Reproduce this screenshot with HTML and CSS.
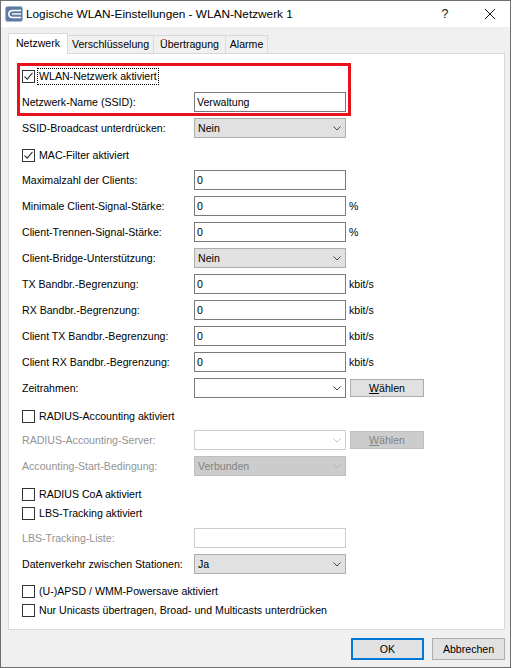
FILE: index.html
```html
<!DOCTYPE html>
<html lang="de">
<head>
<meta charset="utf-8">
<title>Logische WLAN-Einstellungen</title>
<link rel="stylesheet" href="styles.css">
</head>
<body>
<div class="window">
  <div class="titlebar">
    <svg class="app-icon" width="18" height="16" viewBox="0 0 18 16">
      <rect x="0.5" y="0.5" width="17" height="15" rx="2" fill="#5d7ca4" stroke="#a9bad0"/>
      <path d="M16 4.5 H8 Q3.8 4.5 3.8 8 Q3.8 11.5 8 11.5 H16" fill="none" stroke="#fff" stroke-width="1.6"/>
      <path d="M7 8 H16" stroke="#fff" stroke-width="1.4"/>
    </svg>
    <span class="title">Logische WLAN-Einstellungen - WLAN-Netzwerk 1</span>
    <span class="cap help">?</span>
    <span class="cap close">
      <svg width="10" height="10" viewBox="0 0 10 10"><path d="M0 0 L10 10 M10 0 L0 10" stroke="#111" stroke-width="1"/></svg>
    </span>
  </div>
  <div class="content">
    <div class="tabs">
      <div class="tab active">Netzwerk</div>
      <div class="tab w86">Verschlüsselung</div>
      <div class="tab w72">Übertragung</div>
      <div class="tab w42">Alarme</div>
    </div>
    <div class="panel">
      <div class="highlight">
        <div class="check">
          <span class="box"><svg width="11" height="11" viewBox="0 0 11 11"><path d="M1.5 5.5 L4.2 8.2 L9.5 1.8" fill="none" stroke="#333" stroke-width="1.1"/></svg></span>
          <span class="check-label focus">WLAN-Netzwerk aktiviert</span>
        </div>
        <div class="field gap-6">
          <span class="lbl">Netzwerk-Name (SSID):</span>
          <span class="textbox">Verwaltung</span>
        </div>
      </div>

      <div class="field gap-2">
        <span class="lbl">SSID-Broadcast unterdrücken:</span>
        <span class="select"><span>Nein</span><svg class="chev" width="8" height="5" viewBox="0 0 8 5"><path d="M0.5 0.5 L4 4 L7.5 0.5" fill="none" stroke="#444"/></svg></span>
      </div>

      <div class="check gap-8">
        <span class="box"><svg width="11" height="11" viewBox="0 0 11 11"><path d="M1.5 5.5 L4.2 8.2 L9.5 1.8" fill="none" stroke="#333" stroke-width="1.1"/></svg></span>
        <span class="check-label">MAC-Filter aktiviert</span>
      </div>

      <div class="field gap-5">
        <span class="lbl">Maximalzahl der Clients:</span>
        <span class="textbox">0</span>
      </div>
      <div class="field">
        <span class="lbl">Minimale Client-Signal-Stärke:</span>
        <span class="textbox">0</span>
        <span class="unit">%</span>
      </div>
      <div class="field">
        <span class="lbl">Client-Trennen-Signal-Stärke:</span>
        <span class="textbox">0</span>
        <span class="unit">%</span>
      </div>
      <div class="field">
        <span class="lbl">Client-Bridge-Unterstützung:</span>
        <span class="select"><span>Nein</span><svg class="chev" width="8" height="5" viewBox="0 0 8 5"><path d="M0.5 0.5 L4 4 L7.5 0.5" fill="none" stroke="#444"/></svg></span>
      </div>
      <div class="field">
        <span class="lbl">TX Bandbr.-Begrenzung:</span>
        <span class="textbox">0</span>
        <span class="unit">kbit/s</span>
      </div>
      <div class="field">
        <span class="lbl">RX Bandbr.-Begrenzung:</span>
        <span class="textbox">0</span>
        <span class="unit">kbit/s</span>
      </div>
      <div class="field">
        <span class="lbl">Client TX Bandbr.-Begrenzung:</span>
        <span class="textbox">0</span>
        <span class="unit">kbit/s</span>
      </div>
      <div class="field">
        <span class="lbl">Client RX Bandbr.-Begrenzung:</span>
        <span class="textbox">0</span>
        <span class="unit">kbit/s</span>
      </div>
      <div class="field">
        <span class="lbl">Zeitrahmen:</span>
        <span class="combo"><span></span><svg class="chev" width="8" height="5" viewBox="0 0 8 5"><path d="M0.5 0.5 L4 4 L7.5 0.5" fill="none" stroke="#444"/></svg></span>
        <span class="pick"><u>W</u>ählen</span>
      </div>

      <div class="check gap-9">
        <span class="box"></span>
        <span class="check-label">RADIUS-Accounting aktiviert</span>
      </div>

      <div class="field gap-4 disabled">
        <span class="lbl">RADIUS-Accounting-Server:</span>
        <span class="combo"><span></span><svg class="chev" width="8" height="5" viewBox="0 0 8 5"><path d="M0.5 0.5 L4 4 L7.5 0.5" fill="none" stroke="#c4c4c4"/></svg></span>
        <span class="pick"><u>W</u>ählen</span>
      </div>
      <div class="field disabled">
        <span class="lbl">Accounting-Start-Bedingung:</span>
        <span class="select"><span>Verbunden</span><svg class="chev" width="8" height="5" viewBox="0 0 8 5"><path d="M0.5 0.5 L4 4 L7.5 0.5" fill="none" stroke="#b4b4b4"/></svg></span>
      </div>

      <div class="check gap-9">
        <span class="box"></span>
        <span class="check-label">RADIUS CoA aktiviert</span>
      </div>
      <div class="check gap-0">
        <span class="box"></span>
        <span class="check-label">LBS-Tracking aktiviert</span>
      </div>

      <div class="field gap-5 disabled">
        <span class="lbl">LBS-Tracking-Liste:</span>
        <span class="textbox"></span>
      </div>
      <div class="field">
        <span class="lbl">Datenverkehr zwischen Stationen:</span>
        <span class="select"><span>Ja</span><svg class="chev" width="8" height="5" viewBox="0 0 8 5"><path d="M0.5 0.5 L4 4 L7.5 0.5" fill="none" stroke="#444"/></svg></span>
      </div>

      <div class="check gap-8">
        <span class="box"></span>
        <span class="check-label">(U-)APSD / WMM-Powersave aktiviert</span>
      </div>
      <div class="check gap-0">
        <span class="box"></span>
        <span class="check-label">Nur Unicasts übertragen, Broad- und Multicasts unterdrücken</span>
      </div>
    </div>
    <div class="buttons">
      <span class="btn default">OK</span>
      <span class="btn">Abbrechen</span>
    </div>
  </div>
</div>
</body>
</html>
```
FILE: styles.css
```css
* { box-sizing: border-box; }
html, body { margin: 0; padding: 0; background: #ffffff; }
body {
  font-family: "Liberation Sans", Arial, sans-serif;
  font-size: 10.6px;
  color: #000;
}
.window {
  width: 511px;
  height: 668px;
  border: 1px solid #6f6f6f;
  background: #f0f0f0;
  display: flex;
  flex-direction: column;
}
.titlebar {
  height: 26px;
  background: #fff;
  display: flex;
  align-items: center;
  flex: none;
}
.app-icon { margin-left: 4px; margin-right: 3px; flex: none; }
.title {
  flex: 1;
  font-size: 11.8px;
  line-height: 26px;
  white-space: nowrap;
}
.cap {
  display: flex;
  align-items: center;
  justify-content: center;
  height: 26px;
}
.help { width: 48px; font-size: 12.5px; color: #111; }
.close { width: 41px; }

.content {
  flex: 1;
  padding: 6px 5px 0 7px;
  display: flex;
  flex-direction: column;
}
.tabs {
  display: flex;
  align-items: flex-end;
  height: 20px;
}
.tab {
  height: 18px;
  line-height: 17px;
  text-align: center;
  border-top: 1px solid #d9d9d9;
  border-right: 1px solid #d9d9d9;
  background: #f0f0f0;
  white-space: nowrap;
}
.tab.active {
  width: 60px;
  height: 21px;
  line-height: 18px;
  background: #fff;
  border: 1px solid #d9d9d9;
  border-bottom: none;
  margin-bottom: -1px;
  position: relative;
  z-index: 1;
}
.w86 { width: 86px; }
.w72 { width: 72px; }
.w42 { width: 42px; }

.panel {
  background: #fff;
  border: 1px solid #d9d9d9;
  padding: 9px 0 9px 13px;
  display: flex;
  flex-direction: column;
  align-items: flex-start;
}
.highlight {
  border: 3px solid #e8111c;
  margin-left: -5px;
  padding: 1px 2px 1px 2px;
}
.field {
  display: flex;
  align-items: center;
  height: 20px;
  margin-top: 6px;
  white-space: nowrap;
}
.lbl { width: 172px; line-height: 20px; }
.textbox {
  width: 152px;
  height: 20px;
  border: 1px solid #7a7a7a;
  background: #fff;
  padding-left: 2px;
  line-height: 18px;
}
.select, .combo {
  width: 152px;
  height: 20px;
  display: flex;
  align-items: center;
  justify-content: space-between;
  padding: 0 4px 0 3px;
  line-height: 18px;
}
.select { background: #e1e1e1; border: 1px solid #adadad; }
.combo { background: #fff; border: 1px solid #7a7a7a; }
.chev { flex: none; margin-top: 1px; }
.unit { margin-left: 3px; }
.pick {
  margin-left: 4px;
  width: 74px;
  height: 18px;
  line-height: 16px;
  text-align: center;
  background: #e1e1e1;
  border: 1px solid #adadad;
}
.pick u { text-decoration-thickness: 1px; text-underline-offset: 1px; }

.disabled .lbl { color: #939393; }
.disabled .select { background: #cccccc; border-color: #bfbfbf; color: #838383; }
.disabled .combo { border-color: #cccccc; }
.disabled .textbox { border-color: #cccccc; }
.disabled .pick { background: #cccccc; border-color: #bfbfbf; color: #838383; }

.check {
  display: flex;
  align-items: center;
  height: 19px;
  white-space: nowrap;
}
.box {
  width: 13px;
  height: 13px;
  border: 1px solid #333;
  background: #fff;
  margin-right: 2px;
  display: flex;
  align-items: center;
  justify-content: center;
  flex: none;
}
.check-label {
  padding: 0 1px;
  border: 1px dotted transparent;
  line-height: 15px;
}
.check-label.focus { border-color: #000; }

.gap-0 { margin-top: 0; }
.gap-2 { margin-top: 2px; }
.gap-4 { margin-top: 4px; }
.gap-5 { margin-top: 5px; }
.gap-6 { margin-top: 6px; }
.gap-8 { margin-top: 8px; }
.gap-9 { margin-top: 9px; }

.buttons {
  display: flex;
  justify-content: flex-end;
  gap: 8px;
  margin-top: 8px;
}
.btn {
  width: 73px;
  height: 22px;
  line-height: 20px;
  text-align: center;
  background: #e1e1e1;
  border: 1px solid #adadad;
}
.btn.default {
  border: 2px solid #0078d7;
  line-height: 18px;
}
```
